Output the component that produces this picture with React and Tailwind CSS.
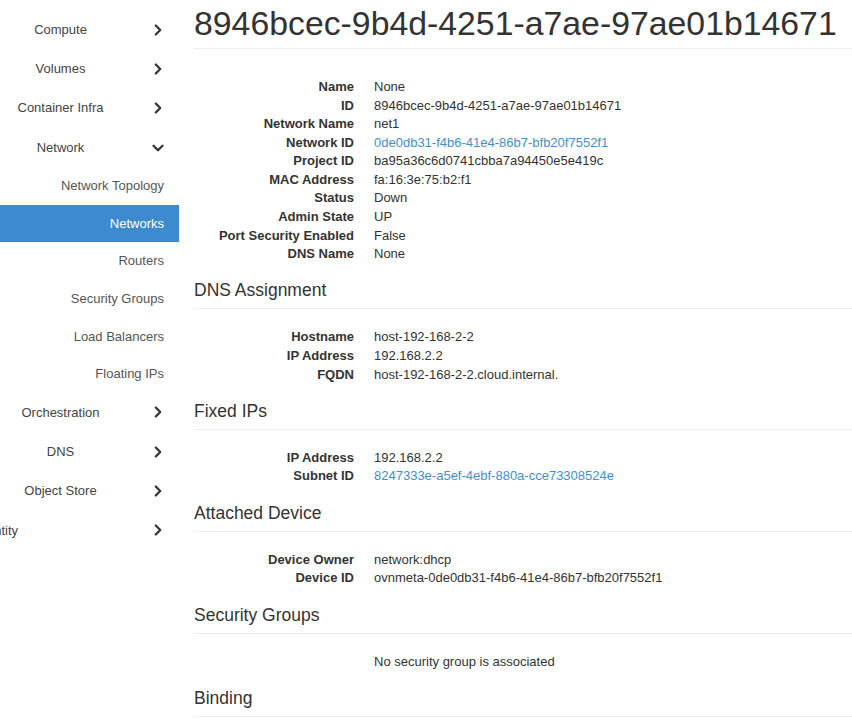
import React from 'react';
import { ChevronRight, ChevronDown } from 'lucide-react';

const menu = [
  { label: 'Compute', type: 'top' },
  { label: 'Volumes', type: 'top' },
  { label: 'Container Infra', type: 'top' },
  { label: 'Network', type: 'top', open: true },
  { label: 'Network Topology', type: 'sub' },
  { label: 'Networks', type: 'sub', active: true },
  { label: 'Routers', type: 'sub' },
  { label: 'Security Groups', type: 'sub' },
  { label: 'Load Balancers', type: 'sub' },
  { label: 'Floating IPs', type: 'sub' },
  { label: 'Orchestration', type: 'top' },
  { label: 'DNS', type: 'top' },
  { label: 'Object Store', type: 'top' },
  { label: 'Identity', type: 'top', clipped: true },
];

const overview = [
  ['Name', 'None'],
  ['ID', '8946bcec-9b4d-4251-a7ae-97ae01b14671'],
  ['Network Name', 'net1'],
  ['Network ID', '0de0db31-f4b6-41e4-86b7-bfb20f7552f1', true],
  ['Project ID', 'ba95a36c6d0741cbba7a94450e5e419c'],
  ['MAC Address', 'fa:16:3e:75:b2:f1'],
  ['Status', 'Down'],
  ['Admin State', 'UP'],
  ['Port Security Enabled', 'False'],
  ['DNS Name', 'None'],
];

const sections = [
  {
    title: 'DNS Assignment',
    rows: [
      ['Hostname', 'host-192-168-2-2'],
      ['IP Address', '192.168.2.2'],
      ['FQDN', 'host-192-168-2-2.cloud.internal.'],
    ],
  },
  {
    title: 'Fixed IPs',
    rows: [
      ['IP Address', '192.168.2.2'],
      ['Subnet ID', '8247333e-a5ef-4ebf-880a-cce73308524e', true],
    ],
  },
  {
    title: 'Attached Device',
    rows: [
      ['Device Owner', 'network:dhcp'],
      ['Device ID', 'ovnmeta-0de0db31-f4b6-41e4-86b7-bfb20f7552f1'],
    ],
  },
  {
    title: 'Security Groups',
    rows: [['', 'No security group is associated']],
  },
  { title: 'Binding', rows: [] },
];

function Rows({ rows }) {
  return (
    <dl className="grid grid-cols-[160px_1fr] gap-x-[20px] leading-[18.57px]">
      {rows.map(([k, v, link], i) => (
        <React.Fragment key={i}>
          <dt className="text-right font-bold text-[#333]">{k}</dt>
          <dd className={link ? 'text-[#3f8fd2]' : 'text-[#333]'}>{v}</dd>
        </React.Fragment>
      ))}
    </dl>
  );
}

function Sidebar() {
  return (
    <div className="w-[179px] shrink-0 pt-[10px] text-[13px]">
      {menu.map((item) => {
        if (item.type === 'sub') {
          return (
            <div
              key={item.label}
              className={`h-[37.6px] flex items-center justify-end pr-[15px] ${
                item.active ? 'bg-[#3d8bce] text-white' : 'text-[#555]'
              }`}
            >
              {item.label}
            </div>
          );
        }
        return (
          <div key={item.label} className="h-[39.3px] flex items-center text-[#444]">
            {item.clipped ? (
              <div className="w-[121px] shrink-0 flex">
                <div className="w-[18px] flex justify-end">
                  <span className="whitespace-nowrap">{item.label}</span>
                </div>
              </div>
            ) : (
              <div className="w-[121px] shrink-0 text-center">{item.label}</div>
            )}
            <div className="ml-[28px] w-[18px] flex justify-center">
              {item.open ? (
                <ChevronDown size={18} strokeWidth={3} className="text-[#333]" />
              ) : (
                <ChevronRight size={18} strokeWidth={3} className="text-[#333]" />
              )}
            </div>
          </div>
        );
      })}
    </div>
  );
}

export default function App() {
  return (
    <div
      className="w-[852px] h-[724px] overflow-hidden bg-white flex"
      style={{ fontFamily: '"Liberation Sans", Arial, sans-serif' }}
    >
      <Sidebar />
      <div className="flex-1 pl-[15px] text-[13px]">
        <div className="pt-[3px] pb-[5px] border-b border-[#eee]">
          <h1 className="text-[33.8px] leading-[40px] text-[#333] whitespace-nowrap">
            8946bcec-9b4d-4251-a7ae-97ae01b14671
          </h1>
        </div>
        <div className="mt-[29px]">
          <Rows rows={overview} />
        </div>
        {sections.map((s) => (
          <div key={s.title} className="mt-[16.6px]">
            <h4 className="text-[17.5px] leading-[20px] pb-2 border-b border-[#eee] text-[#333]">
              {s.title}
            </h4>
            {s.rows.length > 0 && (
              <div className="mt-[19.2px]">
                <Rows rows={s.rows} />
              </div>
            )}
          </div>
        ))}
      </div>
    </div>
  );
}
